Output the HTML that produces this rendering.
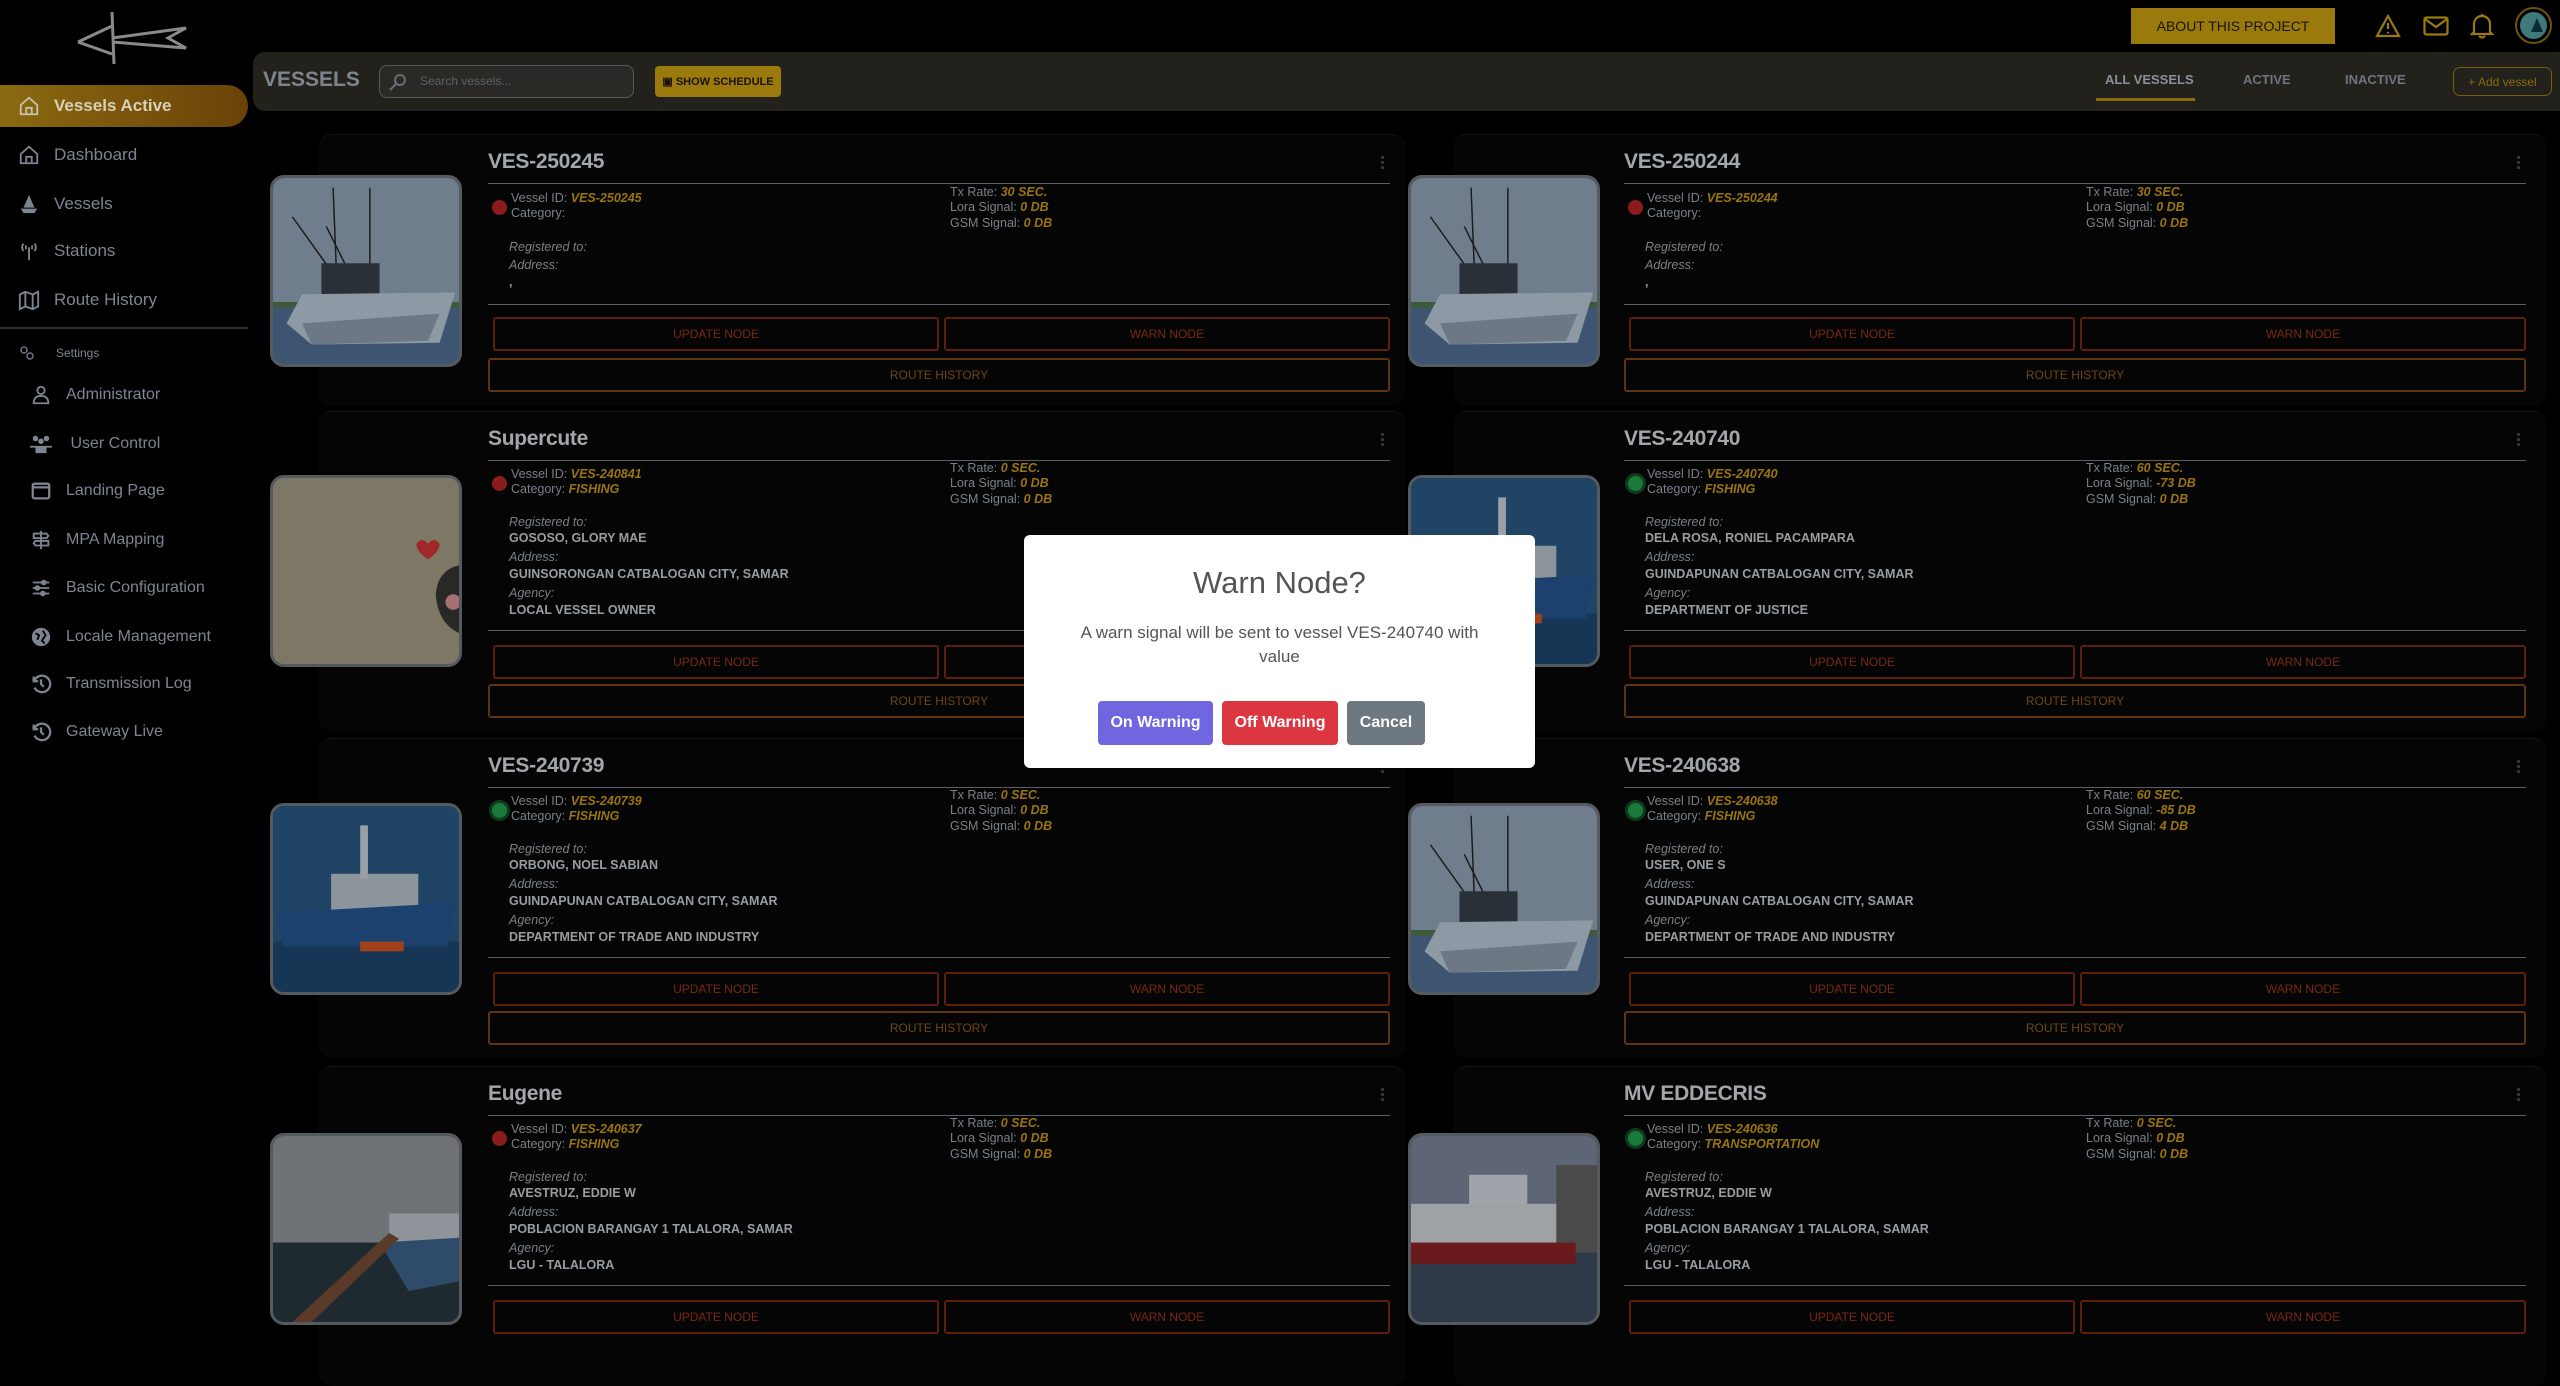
<!DOCTYPE html>
<html><head><meta charset="utf-8">
<style>
*{box-sizing:border-box;margin:0;padding:0}
body{width:2560px;height:1305px;background:#000;overflow:hidden;position:relative;font-family:"Liberation Sans Narrow","Liberation Sans",sans-serif;color:#8a8f96}
.abs{position:absolute}
.side{position:absolute;left:0;top:0;width:248px;height:1305px;background:#000}
.nav{position:absolute;left:18px;font-size:17px;color:#7d8590;display:flex;align-items:center;gap:14px;font-family:"Liberation Sans",sans-serif}
.nav svg{width:22px;height:22px}
.sub{left:30px;font-size:16px}
.pill{position:absolute;left:0;top:85px;width:248px;height:42px;border-radius:0 21px 21px 0;background:linear-gradient(90deg,#8a6a10,#6a4208)}
.hdr{position:absolute;left:253px;top:52px;width:2307px;height:59px;background:#23211b;border-radius:12px 0 0 12px}
.card{position:absolute;width:1140px}
.bg{position:absolute;top:0;height:320px;background:#050505;border-radius:14px;border-top:1px solid #141414}
.img{position:absolute;left:0;width:192px;height:192px;border:3px solid #555a60;border-radius:14px;overflow:hidden;background:#222}
.img svg{width:100%;height:100%;display:block}
.ct{position:absolute;left:218px;width:902px;top:0;height:320px}
.t{position:absolute;left:0;top:16px;font-size:21px;font-weight:bold;color:#a3a6aa;letter-spacing:-.3px}
.hl{position:absolute;left:0;width:902px;height:1px;background:#5a5f66}
.dot{position:absolute;left:4px;width:15px;height:15px;border-radius:50%;background:#8a1c1c}
.dot.g{background:#1a7a3c;box-shadow:0 0 0 3px #0e3a1c}
.l{position:absolute;font-size:12.5px;color:#7a8088;white-space:nowrap}
.l b{color:#9a740f;font-style:italic;font-weight:bold}
.l i{color:#7a8088}
.v{position:absolute;left:21px;font-size:12.5px;font-weight:bold;color:#999da2;white-space:nowrap}
.btn{position:absolute;height:34px;border:2px solid #5c200c;border-radius:3px;color:#7a2810;font-size:12px;display:flex;align-items:center;justify-content:center}
.rh{border-color:#5e3410;color:#6e4612}
.dots{position:absolute;right:6px;top:22px;width:3px;height:14px;background:repeating-linear-gradient(#333 0 3px,transparent 3px 5px)}
.modal{position:absolute;left:1024px;top:535px;width:511px;height:233px;background:#fff;border-radius:6px;text-align:center;font-family:"Liberation Sans",sans-serif}
.mb{position:absolute;top:166px;height:44px;border-radius:4px;color:#fff;font-weight:bold;font-size:16px;display:flex;align-items:center;justify-content:center}
</style></head><body>
<svg width="0" height="0" style="position:absolute">
<defs>
<symbol id="boat" viewBox="0 0 192 192">
<rect width="192" height="192" fill="#6f7d8c"/><rect y="130" width="192" height="62" fill="#3d5570"/><rect y="128" width="192" height="6" fill="#3f5a3a"/>
<path d="M20 40 L70 110 M55 50 L85 110 M62 10 L66 110 M100 10 L100 110" stroke="#1a1a1a" stroke-width="1.5"/>
<rect x="50" y="88" width="60" height="32" fill="#2a3038"/>
<path d="M14 150 L30 120 L188 118 L172 170 L40 172 Z" fill="#8d99a4"/><path d="M30 150 L172 140 L160 168 L40 172Z" fill="#6c7884"/>
</symbol>
<symbol id="ship" viewBox="0 0 192 192">
<rect width="192" height="192" fill="#1f4466"/><rect y="140" width="192" height="52" fill="#173656"/>
<rect x="60" y="70" width="90" height="40" fill="#8d959c"/><rect x="90" y="20" width="8" height="55" fill="#9aa0a6"/>
<path d="M4 110 L188 100 L180 145 L10 145Z" fill="#1d416e"/><rect x="90" y="140" width="45" height="10" fill="#a0401c"/>
</symbol>
<symbol id="ferry" viewBox="0 0 192 192">
<rect width="192" height="192" fill="#5e6676"/><rect y="120" width="192" height="72" fill="#2e3a48"/>
<rect x="60" y="40" width="60" height="40" fill="#a0a4aa"/><rect x="0" y="70" width="170" height="45" fill="#9ea2a6"/><rect x="150" y="30" width="42" height="90" fill="#4a4a4a"/>
<rect x="0" y="110" width="170" height="22" fill="#6a1a1c"/>
</symbol>
<symbol id="eug" viewBox="0 0 192 192">
<rect width="192" height="192" fill="#6e7276"/><rect y="110" width="192" height="82" fill="#1e2a30"/>
<rect x="120" y="80" width="72" height="30" fill="#8e949a"/><path d="M110 110 L192 105 L192 150 L140 160Z" fill="#2e4c6a"/>
<path d="M20 192 L120 100 L130 106 L40 192Z" fill="#5a3a28"/>
</symbol>
</defs></svg>

<div class="side">
<svg class="abs" style="left:68px;top:8px" width="120" height="60" viewBox="0 0 120 60"><path d="M44 4 L46 56 M10 34 L44 18 M44 30 L118 20 L100 30 L118 40 L44 34 M10 34 L44 46" stroke="#8a8a8a" stroke-width="3" fill="none"/></svg>
<div class="pill"></div>
<div class="nav" style="top:95px;color:#d8d0b8;font-weight:bold;font-family:'Liberation Sans Narrow','Liberation Sans',sans-serif"><svg viewBox="0 0 24 24" fill="none" stroke="#c8c0a8" stroke-width="2"><path d="M3 11 L12 3 L21 11 V21 H3Z M9 21 V14 H15 V21"/></svg>Vessels Active</div>
<div class="nav" style="top:144px"><svg viewBox="0 0 24 24" fill="none" stroke="#7d8590" stroke-width="2"><path d="M3 11 L12 3 L21 11 V21 H3Z M9 21 V14 H15 V21"/></svg>Dashboard</div>
<div class="nav" style="top:193px"><svg viewBox="0 0 24 24" fill="#7d8590"><path d="M12 2 L18 16 H6Z M3 17 H21 L18 22 H6Z"/></svg>Vessels</div>
<div class="nav" style="top:240px"><svg viewBox="0 0 24 24" fill="none" stroke="#7d8590" stroke-width="2"><path d="M12 8 V22 M6 4 Q3 8 6 12 M18 4 Q21 8 18 12 M9 6 Q8 8 9 10 M15 6 Q16 8 15 10"/></svg>Stations</div>
<div class="nav" style="top:289px"><svg viewBox="0 0 24 24" fill="none" stroke="#7d8590" stroke-width="2"><path d="M2 6 L8 3 L16 6 L22 3 V19 L16 22 L8 19 L2 22Z M8 3 V19 M16 6 V22"/></svg>Route History</div>
<div class="abs" style="left:0;top:327px;width:248px;height:2px;background:#2a2e33"></div>
<div class="nav" style="top:344px;font-size:12px;gap:20px"><svg style="width:18px;height:18px" viewBox="0 0 24 24" fill="none" stroke="#6d7580" stroke-width="2"><circle cx="8" cy="8" r="4"/><circle cx="16" cy="16" r="4"/></svg>Settings</div>
<div class="nav sub" style="top:384px"><svg viewBox="0 0 24 24" fill="none" stroke="#7d8590" stroke-width="2"><circle cx="12" cy="7" r="4"/><path d="M4 21 Q4 13 12 13 Q20 13 20 21Z"/></svg>Administrator</div>
<div class="nav sub" style="top:433px"><svg viewBox="0 0 24 24" fill="#7d8590"><circle cx="6" cy="6" r="3"/><circle cx="18" cy="6" r="3"/><circle cx="12" cy="9" r="3"/><path d="M0 14 H24 V16 H0Z M6 16 H18 V22 H6Z"/></svg>&nbsp;User Control</div>
<div class="nav sub" style="top:480px"><svg viewBox="0 0 24 24" fill="none" stroke="#7d8590" stroke-width="2.5"><rect x="3" y="4" width="18" height="16" rx="2"/><path d="M3 8 H21"/></svg>Landing Page</div>
<div class="nav sub" style="top:529px"><svg viewBox="0 0 24 24" fill="none" stroke="#7d8590" stroke-width="2"><path d="M12 2 V22 M4 5 H18 L20 7.5 L18 10 H4Z M20 13 H6 L4 15.5 L6 18 H20Z"/></svg>MPA Mapping</div>
<div class="nav sub" style="top:577px"><svg viewBox="0 0 24 24" fill="none" stroke="#7d8590" stroke-width="2"><path d="M3 6 H21 M3 12 H21 M3 18 H21"/><circle cx="15" cy="6" r="2"/><circle cx="8" cy="12" r="2"/><circle cx="14" cy="18" r="2"/></svg>Basic Configuration</div>
<div class="nav sub" style="top:626px"><svg viewBox="0 0 24 24"><circle cx="12" cy="12" r="10" fill="#7d8590"/><path d="M6 8 L10 10 L8 15 M14 5 L17 10 L13 16 L16 19" stroke="#000" stroke-width="2" fill="none"/></svg>Locale Management</div>
<div class="nav sub" style="top:673px"><svg viewBox="0 0 24 24" fill="none" stroke="#7d8590" stroke-width="2.5"><path d="M4 4 V9 H9 M4.5 9 A9 9 0 1 1 5 16 M12 7 V12 L15 15"/></svg>Transmission Log</div>
<div class="nav sub" style="top:721px"><svg viewBox="0 0 24 24" fill="none" stroke="#7d8590" stroke-width="2.5"><path d="M4 4 V9 H9 M4.5 9 A9 9 0 1 1 5 16 M12 7 V12 L15 15"/></svg>Gateway Live</div>
</div>

<div class="abs" style="left:2131px;top:8px;width:204px;height:36px;background:#9a7a0c;color:#1a1408;font-size:14px;display:flex;align-items:center;justify-content:center;font-family:'Liberation Sans',sans-serif">ABOUT THIS PROJECT</div>
<svg class="abs" style="left:2375px;top:14px" width="26" height="24" viewBox="0 0 26 24" fill="none" stroke="#9a7a0c" stroke-width="2.2"><path d="M13 2 L24 22 H2Z M13 9 V15 M13 18 V19.5"/></svg>
<svg class="abs" style="left:2423px;top:16px" width="26" height="20" viewBox="0 0 26 20" fill="none" stroke="#9a7a0c" stroke-width="2.2"><rect x="1.5" y="1.5" width="23" height="17" rx="2"/><path d="M2 3 L13 11 L24 3"/></svg>
<svg class="abs" style="left:2470px;top:13px" width="24" height="26" viewBox="0 0 24 26" fill="none" stroke="#9a7a0c" stroke-width="2.2"><path d="M4 19 V11 A8 8 0 0 1 20 11 V19 L22 21 H2Z M9 23 Q12 26 15 23 M12 1 V3"/></svg>
<div class="abs" style="left:2515px;top:7px;width:37px;height:37px;border-radius:50%;border:2px solid #6a5410;background:#000;padding:3px"><div style="width:100%;height:100%;border-radius:50%;background:#3e7a7a;position:relative"><div style="position:absolute;left:11px;top:6px;width:0;height:0;border-left:6px solid transparent;border-right:6px solid transparent;border-bottom:14px solid #0e2a3a"></div></div></div>

<div class="hdr">
<div class="abs" style="left:10px;top:16px;font-size:21px;font-weight:bold;color:#7e858e">VESSELS</div>
<div class="abs" style="left:126px;top:13px;width:255px;height:33px;border:1.5px solid #55585c;border-radius:8px;background:#2a2925;font-size:12px;color:#5d6167;padding:8px 0 0 40px;font-family:'Liberation Sans',sans-serif">Search vessels...<svg class="abs" style="left:8px;top:6px" width="20" height="20" viewBox="0 0 20 20" fill="none" stroke="#6a6e74" stroke-width="2"><circle cx="12" cy="8" r="5"/><path d="M8 12 L2 18"/></svg></div>
<div class="abs" style="left:402px;top:14px;width:126px;height:31px;background:#9a7a0c;border-radius:4px;font-size:11px;color:#1a1408;display:flex;align-items:center;justify-content:center;font-weight:bold">&#9635; SHOW SCHEDULE</div>
<div class="abs" style="left:1852px;top:20px;font-size:13px;font-weight:bold;color:#8a9099;font-family:'Liberation Sans',sans-serif">ALL VESSELS</div>
<div class="abs" style="left:1843px;top:46px;width:99px;height:3px;background:#8a6c0c"></div>
<div class="abs" style="left:1990px;top:20px;font-size:13px;font-weight:bold;color:#6e757e;font-family:'Liberation Sans',sans-serif">ACTIVE</div>
<div class="abs" style="left:2092px;top:20px;font-size:13px;font-weight:bold;color:#6e757e;font-family:'Liberation Sans',sans-serif">INACTIVE</div>
<div class="abs" style="left:2200px;top:15px;width:99px;height:29px;border:1.5px solid #7a5e0c;border-radius:7px;color:#8a6c0c;font-size:12px;display:flex;align-items:center;justify-content:center;font-family:'Liberation Sans',sans-serif">+ Add vessel</div>
</div>

<!-- ROW 1 -->
<div class="card" style="left:270px;top:134px">
<div class="bg" style="left:48px;width:1088px;height:272px"></div>
<div class="img" style="top:41px"><svg><use href="#boat"/></svg></div>
<div class="ct"><div class="t">VES-250245</div><div class="dots"></div><div class="hl" style="top:49px"></div>
<div class="dot" style="top:66px"></div>
<div class="l" style="left:23px;top:57px">Vessel ID: <b>VES-250245</b></div>
<div class="l" style="left:23px;top:72px">Category:</div>
<div class="l" style="left:462px;top:51px">Tx Rate: <b>30 SEC.</b></div>
<div class="l" style="left:462px;top:66px">Lora Signal: <b>0 DB</b></div>
<div class="l" style="left:462px;top:82px">GSM Signal: <b>0 DB</b></div>
<div class="l" style="left:21px;top:106px"><i style="font-style:italic">Registered to:</i></div>
<div class="l" style="left:21px;top:124px"><i style="font-style:italic">Address:</i></div>
<div class="v" style="top:141px">,</div>
<div class="hl" style="top:170px"></div>
<div class="btn" style="left:5px;top:183px;width:446px">UPDATE NODE</div>
<div class="btn" style="left:456px;top:183px;width:446px">WARN NODE</div>
<div class="btn rh" style="left:0;top:224px;width:902px">ROUTE HISTORY</div>
</div></div>

<div class="card" style="left:1408px;top:134px">
<div class="bg" style="left:45px;width:1094px;height:272px"></div>
<div class="img" style="top:41px"><svg><use href="#boat"/></svg></div>
<div class="ct" style="left:216px"><div class="t">VES-250244</div><div class="dots"></div><div class="hl" style="top:49px"></div>
<div class="dot" style="top:66px"></div>
<div class="l" style="left:23px;top:57px">Vessel ID: <b>VES-250244</b></div>
<div class="l" style="left:23px;top:72px">Category:</div>
<div class="l" style="left:462px;top:51px">Tx Rate: <b>30 SEC.</b></div>
<div class="l" style="left:462px;top:66px">Lora Signal: <b>0 DB</b></div>
<div class="l" style="left:462px;top:82px">GSM Signal: <b>0 DB</b></div>
<div class="l" style="left:21px;top:106px"><i style="font-style:italic">Registered to:</i></div>
<div class="l" style="left:21px;top:124px"><i style="font-style:italic">Address:</i></div>
<div class="v" style="top:141px">,</div>
<div class="hl" style="top:170px"></div>
<div class="btn" style="left:5px;top:183px;width:446px">UPDATE NODE</div>
<div class="btn" style="left:456px;top:183px;width:446px">WARN NODE</div>
<div class="btn rh" style="left:0;top:224px;width:902px">ROUTE HISTORY</div>
</div></div>

<!-- ROW 2 -->
<div class="card" style="left:270px;top:411px">
<div class="bg" style="left:48px;width:1088px"></div>
<div class="img" style="top:64px;background:#7d7866"><svg viewBox="0 0 192 192"><rect width="192" height="192" fill="#7d7866"/><path d="M160 68 q-6-8-12 0 q0 8 12 16 q12-8 12-16 q-6-8-12 0z" fill="#a02828"/><path d="M192 90 Q170 95 168 120 Q170 150 192 160Z" fill="#2a2826"/><circle cx="186" cy="128" r="8" fill="#a87070"/></svg></div>
<div class="ct"><div class="t">Supercute</div><div class="dots"></div><div class="hl" style="top:49px"></div>
<div class="dot" style="top:65px"></div>
<div class="l" style="left:23px;top:56px">Vessel ID: <b>VES-240841</b></div>
<div class="l" style="left:23px;top:71px">Category: <b>FISHING</b></div>
<div class="l" style="left:462px;top:50px">Tx Rate: <b>0 SEC.</b></div>
<div class="l" style="left:462px;top:65px">Lora Signal: <b>0 DB</b></div>
<div class="l" style="left:462px;top:81px">GSM Signal: <b>0 DB</b></div>
<div class="l" style="left:21px;top:104px;font-style:italic">Registered to:</div>
<div class="v" style="top:120px">GOSOSO, GLORY MAE</div>
<div class="l" style="left:21px;top:139px;font-style:italic">Address:</div>
<div class="v" style="top:156px">GUINSORONGAN CATBALOGAN CITY, SAMAR</div>
<div class="l" style="left:21px;top:175px;font-style:italic">Agency:</div>
<div class="v" style="top:192px">LOCAL VESSEL OWNER</div>
<div class="hl" style="top:219px"></div>
<div class="btn" style="left:5px;top:234px;width:446px">UPDATE NODE</div>
<div class="btn" style="left:456px;top:234px;width:446px">WARN NODE</div>
<div class="btn rh" style="left:0;top:273px;width:902px">ROUTE HISTORY</div>
</div></div>

<div class="card" style="left:1408px;top:411px">
<div class="bg" style="left:45px;width:1094px"></div>
<div class="img" style="top:64px"><svg><use href="#ship"/></svg></div>
<div class="ct" style="left:216px"><div class="t">VES-240740</div><div class="dots"></div><div class="hl" style="top:49px"></div>
<div class="dot g" style="top:65px"></div>
<div class="l" style="left:23px;top:56px">Vessel ID: <b>VES-240740</b></div>
<div class="l" style="left:23px;top:71px">Category: <b>FISHING</b></div>
<div class="l" style="left:462px;top:50px">Tx Rate: <b>60 SEC.</b></div>
<div class="l" style="left:462px;top:65px">Lora Signal: <b>-73 DB</b></div>
<div class="l" style="left:462px;top:81px">GSM Signal: <b>0 DB</b></div>
<div class="l" style="left:21px;top:104px;font-style:italic">Registered to:</div>
<div class="v" style="top:120px">DELA ROSA, RONIEL PACAMPARA</div>
<div class="l" style="left:21px;top:139px;font-style:italic">Address:</div>
<div class="v" style="top:156px">GUINDAPUNAN CATBALOGAN CITY, SAMAR</div>
<div class="l" style="left:21px;top:175px;font-style:italic">Agency:</div>
<div class="v" style="top:192px">DEPARTMENT OF JUSTICE</div>
<div class="hl" style="top:219px"></div>
<div class="btn" style="left:5px;top:234px;width:446px">UPDATE NODE</div>
<div class="btn" style="left:456px;top:234px;width:446px">WARN NODE</div>
<div class="btn rh" style="left:0;top:273px;width:902px">ROUTE HISTORY</div>
</div></div>

<!-- ROW 3 -->
<div class="card" style="left:270px;top:738px">
<div class="bg" style="left:48px;width:1088px"></div>
<div class="img" style="top:65px"><svg><use href="#ship"/></svg></div>
<div class="ct"><div class="t">VES-240739</div><div class="dots"></div><div class="hl" style="top:49px"></div>
<div class="dot g" style="top:65px"></div>
<div class="l" style="left:23px;top:56px">Vessel ID: <b>VES-240739</b></div>
<div class="l" style="left:23px;top:71px">Category: <b>FISHING</b></div>
<div class="l" style="left:462px;top:50px">Tx Rate: <b>0 SEC.</b></div>
<div class="l" style="left:462px;top:65px">Lora Signal: <b>0 DB</b></div>
<div class="l" style="left:462px;top:81px">GSM Signal: <b>0 DB</b></div>
<div class="l" style="left:21px;top:104px;font-style:italic">Registered to:</div>
<div class="v" style="top:120px">ORBONG, NOEL SABIAN</div>
<div class="l" style="left:21px;top:139px;font-style:italic">Address:</div>
<div class="v" style="top:156px">GUINDAPUNAN CATBALOGAN CITY, SAMAR</div>
<div class="l" style="left:21px;top:175px;font-style:italic">Agency:</div>
<div class="v" style="top:192px">DEPARTMENT OF TRADE AND INDUSTRY</div>
<div class="hl" style="top:219px"></div>
<div class="btn" style="left:5px;top:234px;width:446px">UPDATE NODE</div>
<div class="btn" style="left:456px;top:234px;width:446px">WARN NODE</div>
<div class="btn rh" style="left:0;top:273px;width:902px">ROUTE HISTORY</div>
</div></div>

<div class="card" style="left:1408px;top:738px">
<div class="bg" style="left:45px;width:1094px"></div>
<div class="img" style="top:65px"><svg><use href="#boat"/></svg></div>
<div class="ct" style="left:216px"><div class="t">VES-240638</div><div class="dots"></div><div class="hl" style="top:49px"></div>
<div class="dot g" style="top:65px"></div>
<div class="l" style="left:23px;top:56px">Vessel ID: <b>VES-240638</b></div>
<div class="l" style="left:23px;top:71px">Category: <b>FISHING</b></div>
<div class="l" style="left:462px;top:50px">Tx Rate: <b>60 SEC.</b></div>
<div class="l" style="left:462px;top:65px">Lora Signal: <b>-85 DB</b></div>
<div class="l" style="left:462px;top:81px">GSM Signal: <b>4 DB</b></div>
<div class="l" style="left:21px;top:104px;font-style:italic">Registered to:</div>
<div class="v" style="top:120px">USER, ONE S</div>
<div class="l" style="left:21px;top:139px;font-style:italic">Address:</div>
<div class="v" style="top:156px">GUINDAPUNAN CATBALOGAN CITY, SAMAR</div>
<div class="l" style="left:21px;top:175px;font-style:italic">Agency:</div>
<div class="v" style="top:192px">DEPARTMENT OF TRADE AND INDUSTRY</div>
<div class="hl" style="top:219px"></div>
<div class="btn" style="left:5px;top:234px;width:446px">UPDATE NODE</div>
<div class="btn" style="left:456px;top:234px;width:446px">WARN NODE</div>
<div class="btn rh" style="left:0;top:273px;width:902px">ROUTE HISTORY</div>
</div></div>

<!-- ROW 4 -->
<div class="card" style="left:270px;top:1066px">
<div class="bg" style="left:48px;width:1088px"></div>
<div class="img" style="top:67px"><svg><use href="#eug"/></svg></div>
<div class="ct"><div class="t">Eugene</div><div class="dots"></div><div class="hl" style="top:49px"></div>
<div class="dot" style="top:65px"></div>
<div class="l" style="left:23px;top:56px">Vessel ID: <b>VES-240637</b></div>
<div class="l" style="left:23px;top:71px">Category: <b>FISHING</b></div>
<div class="l" style="left:462px;top:50px">Tx Rate: <b>0 SEC.</b></div>
<div class="l" style="left:462px;top:65px">Lora Signal: <b>0 DB</b></div>
<div class="l" style="left:462px;top:81px">GSM Signal: <b>0 DB</b></div>
<div class="l" style="left:21px;top:104px;font-style:italic">Registered to:</div>
<div class="v" style="top:120px">AVESTRUZ, EDDIE W</div>
<div class="l" style="left:21px;top:139px;font-style:italic">Address:</div>
<div class="v" style="top:156px">POBLACION BARANGAY 1 TALALORA, SAMAR</div>
<div class="l" style="left:21px;top:175px;font-style:italic">Agency:</div>
<div class="v" style="top:192px">LGU - TALALORA</div>
<div class="hl" style="top:219px"></div>
<div class="btn" style="left:5px;top:234px;width:446px">UPDATE NODE</div>
<div class="btn" style="left:456px;top:234px;width:446px">WARN NODE</div>
</div></div>

<div class="card" style="left:1408px;top:1066px">
<div class="bg" style="left:45px;width:1094px"></div>
<div class="img" style="top:67px"><svg><use href="#ferry"/></svg></div>
<div class="ct" style="left:216px"><div class="t">MV EDDECRIS</div><div class="dots"></div><div class="hl" style="top:49px"></div>
<div class="dot g" style="top:65px"></div>
<div class="l" style="left:23px;top:56px">Vessel ID: <b>VES-240636</b></div>
<div class="l" style="left:23px;top:71px">Category: <b>TRANSPORTATION</b></div>
<div class="l" style="left:462px;top:50px">Tx Rate: <b>0 SEC.</b></div>
<div class="l" style="left:462px;top:65px">Lora Signal: <b>0 DB</b></div>
<div class="l" style="left:462px;top:81px">GSM Signal: <b>0 DB</b></div>
<div class="l" style="left:21px;top:104px;font-style:italic">Registered to:</div>
<div class="v" style="top:120px">AVESTRUZ, EDDIE W</div>
<div class="l" style="left:21px;top:139px;font-style:italic">Address:</div>
<div class="v" style="top:156px">POBLACION BARANGAY 1 TALALORA, SAMAR</div>
<div class="l" style="left:21px;top:175px;font-style:italic">Agency:</div>
<div class="v" style="top:192px">LGU - TALALORA</div>
<div class="hl" style="top:219px"></div>
<div class="btn" style="left:5px;top:234px;width:446px">UPDATE NODE</div>
<div class="btn" style="left:456px;top:234px;width:446px">WARN NODE</div>
</div></div>

<div class="modal">
<div class="abs" style="left:0;width:511px;top:30px;font-size:31px;color:#545454">Warn Node?</div>
<div class="abs" style="left:40px;width:431px;top:86px;font-size:17px;line-height:24px;color:#545454">A warn signal will be sent to vessel VES-240740 with value</div>
<div class="mb" style="left:74px;width:115px;background:#7066e0">On Warning</div>
<div class="mb" style="left:198px;width:116px;background:#dc3741">Off Warning</div>
<div class="mb" style="left:323px;width:78px;background:#6e7881">Cancel</div>
</div>
</body></html>
